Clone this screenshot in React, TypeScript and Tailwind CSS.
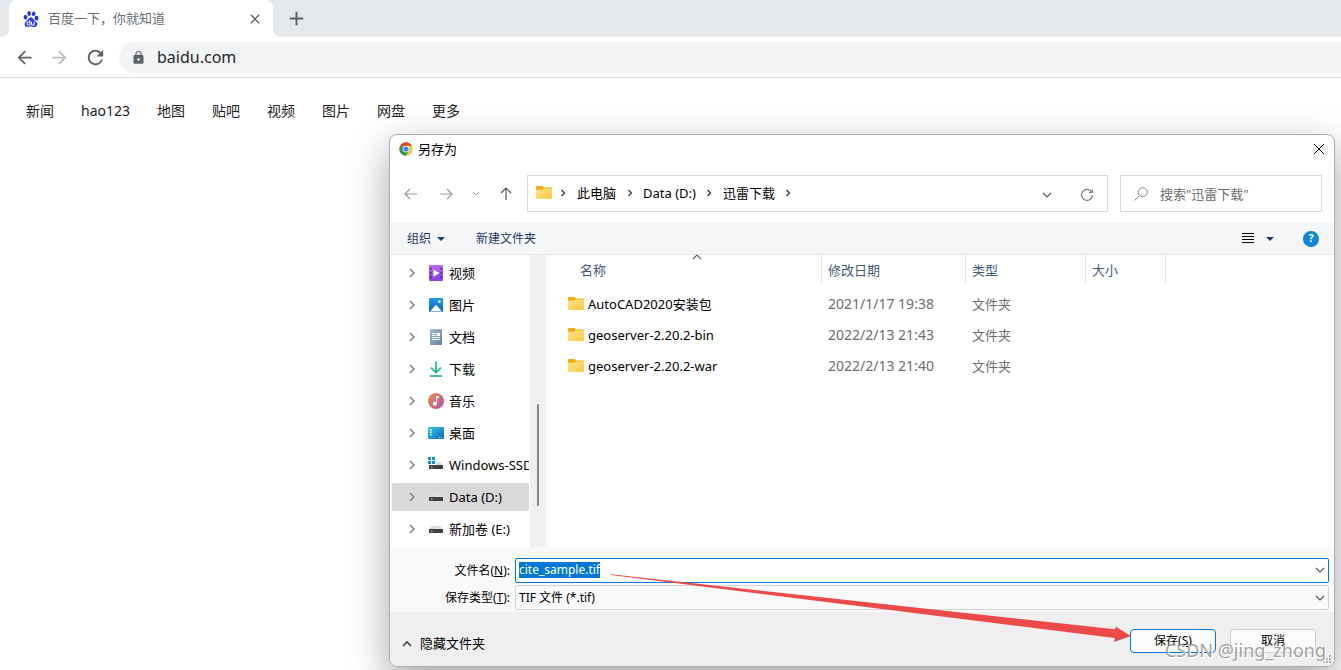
import type { ReactNode } from 'react'
import { MdAdd, MdArrowBack, MdArrowForward, MdClose, MdLock, MdRefresh } from 'react-icons/md'
import { SiBaidu } from 'react-icons/si'

const links = ['新闻', 'hao123', '地图', '贴吧', '视频', '图片', '网盘', '更多']

const files = [
  { name: 'AutoCAD2020安装包', date: '2021/1/17 19:38', type: '文件夹' },
  { name: 'geoserver-2.20.2-bin', date: '2022/2/13 21:43', type: '文件夹' },
  { name: 'geoserver-2.20.2-war', date: '2022/2/13 21:40', type: '文件夹' },
]

const places: { name: string; icon: ReactNode; active?: boolean }[] = [
  { name: '视频', icon: <VideoIcon /> },
  { name: '图片', icon: <PictureIcon /> },
  { name: '文档', icon: <DocumentIcon /> },
  { name: '下载', icon: <DownloadIcon /> },
  { name: '音乐', icon: <MusicIcon /> },
  { name: '桌面', icon: <DesktopIcon /> },
  { name: 'Windows-SSD (C:)', icon: <DriveIcon system /> },
  { name: 'Data (D:)', icon: <DriveIcon />, active: true },
  { name: '新加卷 (E:)', icon: <DriveIcon /> },
]

function VideoIcon() {
  return (
    <svg width="16" height="16" viewBox="0 0 16 16">
      <defs>
        <linearGradient id="video" x1="0" y1="0" x2="0" y2="1">
          <stop offset="0" stopColor="#b66af0" />
          <stop offset="1" stopColor="#8a3be0" />
        </linearGradient>
      </defs>
      <rect x="1" width="14" height="16" rx="1" fill="url(#video)" />
      <path d="M2 3h1.5v1.5H2zM2 7.2h1.5v1.5H2zM2 11.5h1.5V13H2zM12.5 3H14v1.5h-1.5zM12.5 7.2H14v1.5h-1.5zM12.5 11.5H14V13h-1.5z" fill="#4a1a80" />
      <path d="M5.5 4.5v7.2L11.5 8z" fill="#fff" />
    </svg>
  )
}

function PictureIcon() {
  return (
    <svg width="16" height="16" viewBox="0 0 16 16">
      <defs>
        <linearGradient id="picture" x1="0" y1="0" x2="0" y2="1">
          <stop offset="0" stopColor="#1f9be6" />
          <stop offset="1" stopColor="#0a62b8" />
        </linearGradient>
      </defs>
      <rect x="1" y="1" width="14" height="14" rx="1" fill="url(#picture)" />
      <path d="M2 14.5 7.2 8.6q.8-.8 1.6 0L14 14.5z" fill="#fff" />
      <circle cx="11.4" cy="4.6" r="1.3" fill="#fff" />
    </svg>
  )
}

function DocumentIcon() {
  return (
    <svg width="16" height="16" viewBox="0 0 16 16">
      <defs>
        <linearGradient id="document" x1="0" y1="0" x2="1" y2="1">
          <stop offset="0" stopColor="#a9bdd0" />
          <stop offset="1" stopColor="#647f9f" />
        </linearGradient>
      </defs>
      <rect x="2" width="12" height="16" rx="1" fill="url(#document)" />
      <path d="M4 4.5h3.5M4 6.5h3.5M4 8.5h8M4 10.5h8" stroke="#fff" />
      <rect x="8.6" y="4" width="3.4" height="3" fill="#fff" />
    </svg>
  )
}

function DownloadIcon() {
  return (
    <svg width="16" height="16" viewBox="0 0 16 16" fill="none" strokeWidth="1.7" strokeLinecap="round">
      <path d="M8 1v10M3.4 7.2 8 11.6l4.6-4.4" stroke="#23b58a" />
      <path d="M2.5 15h11" stroke="#12998f" />
    </svg>
  )
}

function MusicIcon() {
  return (
    <svg width="16" height="16" viewBox="0 0 16 16">
      <defs>
        <linearGradient id="music" x1="0" y1="0" x2="1" y2="1">
          <stop offset="0" stopColor="#ef8a58" />
          <stop offset="1" stopColor="#b0559a" />
        </linearGradient>
      </defs>
      <circle cx="8" cy="8" r="8" fill="url(#music)" />
      <path d="M8 3h3v2H9v5.6A2 2 0 1 1 8 8.9z" fill="#fff" />
    </svg>
  )
}

function DesktopIcon() {
  return (
    <svg width="16" height="16" viewBox="0 0 16 16">
      <defs>
        <linearGradient id="desktop" x1="0" y1="0" x2="1" y2="1">
          <stop offset="0" stopColor="#35d0e2" />
          <stop offset="1" stopColor="#0b62b4" />
        </linearGradient>
      </defs>
      <rect y="2" width="16" height="12" rx="1" fill="url(#desktop)" />
      <path d="M2 4h1.6v1.4H2zM2 6.6h1.6V8H2zM2 9.2h1.6v1.4H2z" fill="#fff" />
      <path d="M11 12.5h1M13 12.5h1" stroke="#9fe0f5" />
    </svg>
  )
}

function DriveIcon({ system }: { system?: boolean }) {
  return (
    <svg width="16" height="16" viewBox="0 0 16 16">
      <path d="M3.5 5h9L15 8.5H1z" fill="#dcdcdc" />
      <rect x="1" y="8" width="14" height="4" rx=".6" fill="#3f3f3f" />
      <rect x="3" y="9.5" width="1.5" height="1.5" fill="#4be36a" />
      {system && (
        <>
          <path d="M0 0h8v8H0z" fill="#fff" />
          <path d="M0 0h3v3H0zM4 0h3v3H4zM0 4h3v3H0zM4 4h3v3H4z" fill="#0f8ee0" />
        </>
      )}
    </svg>
  )
}

function FolderIcon() {
  return (
    <svg width="16" height="16" viewBox="0 0 16 16" className="shrink-0">
      <defs>
        <linearGradient id="folder" x1="0" y1="0" x2="1" y2="1">
          <stop offset="0" stopColor="#ffe291" />
          <stop offset="1" stopColor="#fcc93f" />
        </linearGradient>
      </defs>
      <path d="M1 1h5.4L8 2.4h7a1 1 0 0 1 1 1V8H0V2a1 1 0 0 1 1-1z" fill="#f0ac0c" />
      <path d="M0 4.8h6.2l1.6-1.2H16V13a1 1 0 0 1-1 1H1a1 1 0 0 1-1-1z" fill="url(#folder)" />
    </svg>
  )
}

function ChromeIcon() {
  return (
    <svg width="14" height="14" viewBox="0 0 48 48">
      <circle cx="24" cy="24" r="23" fill="#fbc934" />
      <path d="M24 24 4.1 12.5A23 23 0 0 1 43.9 12.5H24z" fill="#e24435" />
      <path d="M24 24 4.1 12.5A23 23 0 0 0 24 47l10-17.5z" fill="#2a9c4c" />
      <circle cx="24" cy="24" r="11.5" fill="#fff" />
      <circle cx="24" cy="24" r="9" fill="#4285f4" />
    </svg>
  )
}

function Chevron({ dir, className }: { dir: 'right' | 'down' | 'up'; className?: string }) {
  const paths = {
    right: 'M3.5 2 6.5 5l-3 3',
    down: 'M1 3l4 4 4-4',
    up: 'M1 7l4-4 4 4',
  }
  return (
    <svg width="10" height="10" viewBox="0 0 10 10" fill="none" stroke="currentColor" strokeWidth="1.2" className={className}>
      <path d={paths[dir]} />
    </svg>
  )
}

function Arrow({ d }: { d: string }) {
  return (
    <svg width="14" height="14" viewBox="0 0 14 14" fill="none" stroke="currentColor" strokeWidth="1.2">
      <path d={d} />
    </svg>
  )
}

function Caret() {
  return (
    <svg width="8" height="4" viewBox="0 0 8 4" fill="currentColor">
      <path d="M0 0h8L4 4z" />
    </svg>
  )
}

function Crumb({ children }: { children: ReactNode }) {
  return (
    <>
      <button className="whitespace-nowrap">{children}</button>
      <span className="flex w-[27px] justify-center">
        <Chevron dir="right" className="text-[#333]" />
      </span>
    </>
  )
}

function Browser() {
  return (
    <>
      <div className="flex h-[37px] bg-white">
        <div className="w-[9px] rounded-br-lg bg-[#e5e9ec]" />
        <div className="flex w-[264px] bg-[#e5e9ec]">
          <div className="flex flex-1 items-center rounded-t-lg bg-white pr-[10px] pl-[14px] text-[13px] text-[#6b6f74]">
            <SiBaidu size={16} className="text-[#2932e1]" />
            <span className="flex-1 pl-[9px]">百度一下，你就知道</span>
            <button aria-label="关闭标签页" className="text-[#5f6368]">
              <MdClose size={16} />
            </button>
          </div>
        </div>
        <div className="flex flex-1 items-center rounded-bl-lg bg-[#e5e9ec] pl-3 text-[#5f6368]">
          <button aria-label="新标签页">
            <MdAdd size={23} />
          </button>
        </div>
      </div>
      <div className="flex h-[41px] items-center border-b border-[#dcdcdc] pl-[14px] text-[#5f6368]">
        <button aria-label="后退" className="mr-[14px]">
          <MdArrowBack size={21} />
        </button>
        <button aria-label="前进" className="mr-[14px] text-[#b9bbbe]">
          <MdArrowForward size={21} />
        </button>
        <button aria-label="重新加载" className="mr-3">
          <MdRefresh size={23} />
        </button>
        <div className="flex h-[31px] flex-1 items-center gap-[11px] rounded-l-full bg-[#f1f3f4] pl-3">
          <MdLock size={15} />
          <input
            aria-label="地址"
            defaultValue="baidu.com"
            className="flex-1 bg-transparent text-[16px] text-[#24272b] outline-none"
          />
        </div>
      </div>
      <nav className="flex gap-[27px] px-[26px] pt-[23px] text-sm text-[#222]">
        {links.map((link) => (
          <a key={link} href="#">
            {link}
          </a>
        ))}
      </nav>
    </>
  )
}

function SaveDialog() {
  return (
    <div
      role="dialog"
      aria-label="另存为"
      className="absolute top-[134px] right-[6px] left-[389px] overflow-hidden rounded-lg border border-[#adadad] bg-white text-[13px] leading-5 text-black shadow-[0_14px_38px_rgba(0,0,0,0.36)]"
    >
      <div className="flex h-[28px] items-center pr-[9px] pl-[9px]">
        <ChromeIcon />
        <span className="flex-1 pl-[5px]">另存为</span>
        <button aria-label="关闭">
          <svg width="12" height="12" viewBox="0 0 12 12" stroke="currentColor">
            <path d="M1 1l10 10M11 1 1 11" />
          </svg>
        </button>
      </div>

      <div className="flex items-center pt-3 pr-3 pb-[11px] pl-[14px]">
        <div className="flex w-[123px] items-center text-[#999]">
          <button aria-label="后退" className="mr-[21px]">
            <Arrow d="M13 7H1M6 2 1 7l5 5" />
          </button>
          <button aria-label="前进" className="mr-[19px]">
            <Arrow d="M1 7h12M8 2l5 5-5 5" />
          </button>
          <button aria-label="最近浏览的位置" className="mr-[19px]">
            <svg width="8" height="8" viewBox="0 0 8 8" fill="none" stroke="currentColor">
              <path d="M1 2l3 3 3-3" />
            </svg>
          </button>
          <button aria-label="上移" className="text-[#555]">
            <Arrow d="M7 13V1M2 6l5-5 5 5" />
          </button>
        </div>
        <div className="flex h-[37px] flex-1 items-center border border-[#d9d9d9] pr-[13px] pb-[2px] pl-2">
          <FolderIcon />
          <span className="mr-1 flex w-[21px] justify-center">
            <Chevron dir="right" className="text-[#333]" />
          </span>
          <Crumb>此电脑</Crumb>
          <Crumb>Data (D:)</Crumb>
          <Crumb>迅雷下载</Crumb>
          <button aria-label="历史记录" className="mr-7 ml-auto pt-1 text-[#555]">
            <Chevron dir="down" />
          </button>
          <button aria-label="刷新" className="pt-1 text-[#777]">
            <svg width="14" height="14" viewBox="0 0 14 14" fill="none" stroke="currentColor" strokeWidth="1.1">
              <path d="M11.8 4.2A5.5 5.5 0 1 0 12.5 7M12.3 1.2v3.3H9" />
            </svg>
          </button>
        </div>
        <label className="ml-3 flex h-[37px] w-[202px] items-center gap-3 border border-[#d9d9d9] pl-[13px] text-[#888]">
          <svg width="14" height="14" viewBox="0 0 14 14" fill="none" stroke="currentColor">
            <circle cx="8.8" cy="5.2" r="4.5" />
            <path d="M5.5 8.5.5 13.5" />
          </svg>
          <input
            aria-label="搜索"
            placeholder={'搜索"迅雷下载"'}
            className="w-0 flex-1 bg-transparent outline-none placeholder:text-[#6b6b6b]"
          />
        </label>
      </div>

      <div className="flex h-8 items-center border-b border-[#e5e7e9] bg-[#f4f6f8] pr-[15px] pl-[17px] text-xs text-[#1e3a66]">
        <button className="flex items-center gap-[6px]">
          组织 <Caret />
        </button>
        <button className="ml-[31px] flex-1 text-left">新建文件夹</button>
        <button aria-label="更改视图">
          <svg width="12" height="11" viewBox="0 0 12 11" stroke="#000">
            <path d="M0 .5h12M0 3.5h12M0 6.5h12M0 9.5h12" />
          </svg>
        </button>
        <button aria-label="更多选项" className="ml-3">
          <Caret />
        </button>
        <button
          aria-label="帮助"
          className="ml-[29px] flex size-4 items-center justify-center rounded-full bg-[#0f86d8] text-[11px] font-bold text-white"
        >
          ?
        </button>
      </div>

      <div className="flex h-[292px]">
        <ul className="w-[140px] overflow-hidden pt-[2px] pl-[2px]">
          {places.map((place) => (
            <li key={place.name} className="py-[2px]">
              <button
                className={`flex h-7 w-[137px] items-center overflow-hidden rounded-xs pl-4 whitespace-nowrap ${
                  place.active ? 'bg-[#d9d9d9]' : ''
                }`}
              >
                <svg width="8" height="10" viewBox="0 0 8 10" fill="none" stroke="#858585" strokeWidth="1.5" className="shrink-0">
                  <path d="M2 1l4 4-4 4" />
                </svg>
                <span className="mr-[5px] ml-3 shrink-0">{place.icon}</span>
                {place.name}
              </button>
            </li>
          ))}
        </ul>
        <div className="flex w-4 justify-center bg-[#efefef] pt-[149px]">
          <div className="h-[102px] w-[2px] rounded-full bg-[#858585]" />
        </div>
        <div className="ml-[2px] flex-1 border-l border-[#f3f3f3]">
          <table className="w-full table-fixed border-collapse text-left">
            <thead className="text-[#44597a]">
              <tr>
                <th className="h-[33px] w-[273px] p-0 align-top font-normal">
                  <div className="relative flex h-[29px] items-center border-r border-[#e3e3e3] pl-[31px]">
                    名称
                    <Chevron dir="up" className="absolute -top-[3px] right-[119px] text-[#666]" />
                  </div>
                </th>
                <th className="w-[144px] p-0 align-top font-normal">
                  <div className="flex h-[29px] items-center border-r border-[#e3e3e3] pl-[6px]">修改日期</div>
                </th>
                <th className="w-[120px] p-0 align-top font-normal">
                  <div className="flex h-[29px] items-center border-r border-[#e3e3e3] pl-[6px]">类型</div>
                </th>
                <th className="w-[80px] p-0 align-top font-normal">
                  <div className="flex h-[29px] items-center border-r border-[#e3e3e3] pl-[6px]">大小</div>
                </th>
                <th />
              </tr>
            </thead>
            <tbody className="text-[#6d6d6d]">
              {files.map((file) => (
                <tr key={file.name} className="h-[31px]">
                  <td className="p-0 pl-[19px] text-black">
                    <div className="flex items-center gap-1">
                      <FolderIcon />
                      {file.name}
                    </div>
                  </td>
                  <td className="p-0 pl-[6px] text-sm leading-5">{file.date}</td>
                  <td className="p-0 pl-[6px]">{file.type}</td>
                  <td />
                  <td />
                </tr>
              ))}
            </tbody>
          </table>
        </div>
      </div>

      <div className="flex flex-col gap-[2px] bg-[#f9f9f9] pt-[11px] pr-[5px] pb-[2px] text-xs">
        <div className="flex items-center gap-[5px]">
          <label htmlFor="filename" className="w-[120px] text-right">
            文件名(<u>N</u>):
          </label>
          <div className="flex h-[25px] flex-1 items-center rounded-xs border border-[#0078d4] bg-white pr-[3px] pb-[2px] pl-[3px]">
            <input
              id="filename"
              autoFocus
              defaultValue="cite_sample.tif"
              onFocus={(e) => e.target.select()}
              className="flex-1 bg-transparent outline-none selection:bg-[#0078d7] selection:text-white"
            />
            <button aria-label="以前的文件名" className="text-[#555]">
              <Chevron dir="down" />
            </button>
          </div>
        </div>
        <div className="flex items-center gap-[5px]">
          <label htmlFor="filetype" className="w-[120px] text-right">
            保存类型(<u>T</u>):
          </label>
          <div className="relative flex h-[25px] flex-1 rounded-xs border border-[#d4d4d4]">
            <select id="filetype" className="w-full appearance-none bg-transparent pl-[3px] outline-none">
              <option>TIF 文件 (*.tif)</option>
            </select>
            <Chevron dir="down" className="pointer-events-none absolute top-[7px] right-[3px] text-[#555]" />
          </div>
        </div>
      </div>

      <div className="flex h-[54px] items-start gap-[14px] bg-[#efefef] pt-[17px] pr-[18px] pl-3 text-xs">
        <button className="mr-auto flex items-center gap-2 pt-[6px] text-[13px]">
          <svg width="10" height="10" viewBox="0 0 10 10" fill="none" stroke="#444" strokeWidth="1.7">
            <path d="M1 7l4-4 4 4" />
          </svg>
          隐藏文件夹
        </button>
        <button className="h-6 w-[86px] rounded border border-[#0078d4] bg-[#fbfbfb]">
          保存(<u>S</u>)
        </button>
        <button className="h-6 w-[86px] rounded border border-[#d0d0d0] bg-[#fbfbfb]">取消</button>
      </div>

      <svg width="9" height="9" viewBox="0 0 9 9" fill="#b5b5b5" className="absolute right-[2px] bottom-[2px]">
        <path d="M6 0h2v2H6zM3 3h2v2H3zM6 3h2v2H6zM0 6h2v2H0zM3 6h2v2H3zM6 6h2v2H6z" />
      </svg>
      <svg width="522" height="72" viewBox="0 0 522 72" fill="#ec4a4a" className="pointer-events-none absolute top-[438px] left-[220px]">
        <path d="M1 1.2 505 56.3l1-2.5L521 63l-17 6 .8-4L1 2z" />
      </svg>
      <span className="pointer-events-none absolute right-2 bottom-1 text-lg leading-6 whitespace-nowrap text-[#8c8c8c]/80 [text-shadow:1px_1px_0_#ffffff]">
        CSDN @jing_zhong
      </span>
    </div>
  )
}

export default function App() {
  return (
    <div className="relative min-h-screen overflow-hidden bg-white font-['Noto_Sans','Noto_Sans_CJK_SC',sans-serif]">
      <Browser />
      <SaveDialog />
    </div>
  )
}
